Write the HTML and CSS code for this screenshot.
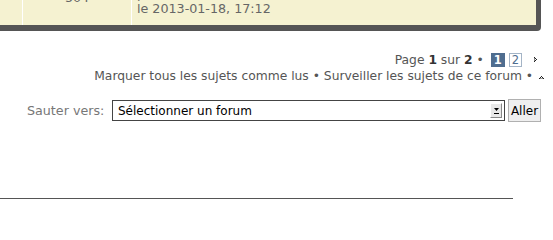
FILE: index.html
```html
<!DOCTYPE html>
<html lang="fr">
<head>
<meta charset="utf-8">
<title>Forum</title>
<link rel="stylesheet" href="styles.css">
</head>
<body>
<div class="panel-wrap">
  <div class="panel">
    <div class="cell c1"></div>
    <div class="cell c2"><span class="num">504</span></div>
    <div class="cell c3">
      <div class="ln">par <span class="author">admin</span></div>
      <div class="ln">le 2013-01-18, 17:12</div>
    </div>
  </div>
</div>

<div class="actions">
  <div class="pagination">Page <b>1</b> sur <b>2</b> • <span class="cur">1</span><a class="pg" href="#">2</a><svg class="ico-next" width="6" height="6" viewBox="0 0 6 6"><rect x="1" y="0" width="1" height="1" fill="#222"/><rect x="2" y="1" width="1" height="1" fill="#222"/><rect x="3" y="2" width="1" height="1" fill="#222"/><rect x="2" y="3" width="1" height="1" fill="#222"/><rect x="1" y="4" width="1" height="1" fill="#222"/><rect x="1" y="1" width="1" height="3" fill="#888"/></svg></div>
  <div class="links">Marquer tous les sujets comme lus • Surveiller les sujets de ce forum • <svg class="ico-top" width="6" height="5" viewBox="0 0 6 5"><rect x="2" y="1" width="1" height="1" fill="#222"/><rect x="1" y="2" width="1" height="1" fill="#222"/><rect x="3" y="2" width="1" height="1" fill="#222"/><rect x="0" y="3" width="1" height="1" fill="#222"/><rect x="4" y="3" width="1" height="1" fill="#222"/><rect x="1" y="3" width="3" height="1" fill="#999"/></svg></div>
</div>

<form class="jump" action="#">
  <label class="jump-label" for="f">Sauter vers:</label>
  <div class="select-wrap">
    <select id="f" class="sel"><option>Sélectionner un forum</option></select>
    <span class="sel-btn"><svg width="5" height="6" viewBox="0 0 5 6"><path d="M0 0h5L2.5 3z" fill="#000"/><rect x="0" y="5" width="5" height="1" fill="#000"/></svg></span>
  </div>
  <button class="go" type="button">Aller</button>
</form>

<div class="footer-line"></div>
</body>
</html>
```

FILE: styles.css
```css
html, body {
  margin: 0;
  padding: 0;
  background: #fff;
}
body {
  font-family: "DejaVu Sans", Verdana, sans-serif;
  font-size: 12px;
  color: #555;
  width: 553px;
  height: 204px;
  overflow: hidden;
}

.panel-wrap {
  width: 536px;
  padding: 0 5px 6px 0;
  background: #555;
  border-bottom-right-radius: 4px;
}
.panel {
  display: grid;
  grid-template-columns: 23px 109px 1fr;
  height: 25px;
  overflow: hidden;
  background: #f5f2d1;
}
.cell {
  border-right: 1px solid #fff;
  font-size: 12.7px;
  line-height: 15px;
  color: #666;
}
.cell.c3 { border-right: 0; padding-left: 5px; margin-top: -14px; }
.c2 { text-align: center; }
.num { display: block; margin-top: -10px; }
.author { color: #555; }

.actions {
  margin-top: 21px;
  padding-right: 8px;
  text-align: right;
  font-size: 12.3px;
  line-height: 16px;
}
.pagination, .links { white-space: nowrap; }
.pagination b { color: #333; }
.cur, .pg {
  display: inline-block;
  font-size: 11.5px;
  line-height: 12px;
  padding: 0 2px;
  margin-left: 3px;
}
.cur {
  background: #4f6d8f;
  color: #fff;
  font-weight: bold;
  border: 1px solid #4f6d8f;
}
.pg {
  color: #4f6d8f;
  text-decoration: none;
  border: 1px solid #a4b4c6;
  margin-left: 4px;
}
.ico-next { margin-left: 11px; margin-right: 6px; vertical-align: 1px; }
.ico-top { margin-left: 2px; vertical-align: 0; }

.jump {
  display: flex;
  align-items: center;
  margin: 15px 0 0 27px;
}
.jump-label {
  font-size: 12.7px;
  color: #777;
  width: 85px;
}
.select-wrap {
  position: relative;
  width: 393px;
  height: 21px;
}
.sel {
  -webkit-appearance: none;
  appearance: none;
  width: 100%;
  height: 21px;
  box-sizing: border-box;
  border: 1px solid #444;
  border-radius: 0;
  background: #fff;
  font-family: "DejaVu Sans", Verdana, sans-serif;
  font-size: 12px;
  color: #000;
  padding: 0 0 0 5px;
  margin: 0;
}
.sel-btn {
  position: absolute;
  right: 3px;
  top: 3px;
  width: 12px;
  height: 15px;
  box-sizing: border-box;
  background: #e8e8e8;
  border-top: 1px solid #fff;
  border-left: 1px solid #fff;
  border-right: 1px solid #888;
  border-bottom: 1px solid #888;
  display: flex;
  align-items: center;
  justify-content: center;
  pointer-events: none;
}
.go {
  margin-left: 3px;
  height: 23px;
  width: 33px;
  padding: 0;
  background: #efefef;
  border: 1px solid #b0b0b0;
  border-radius: 0;
  font-family: "DejaVu Sans", Verdana, sans-serif;
  font-size: 12px;
  color: #000;
}

.footer-line {
  width: 513px;
  border-top: 1px solid #555;
  margin-top: 76px;
}
```
